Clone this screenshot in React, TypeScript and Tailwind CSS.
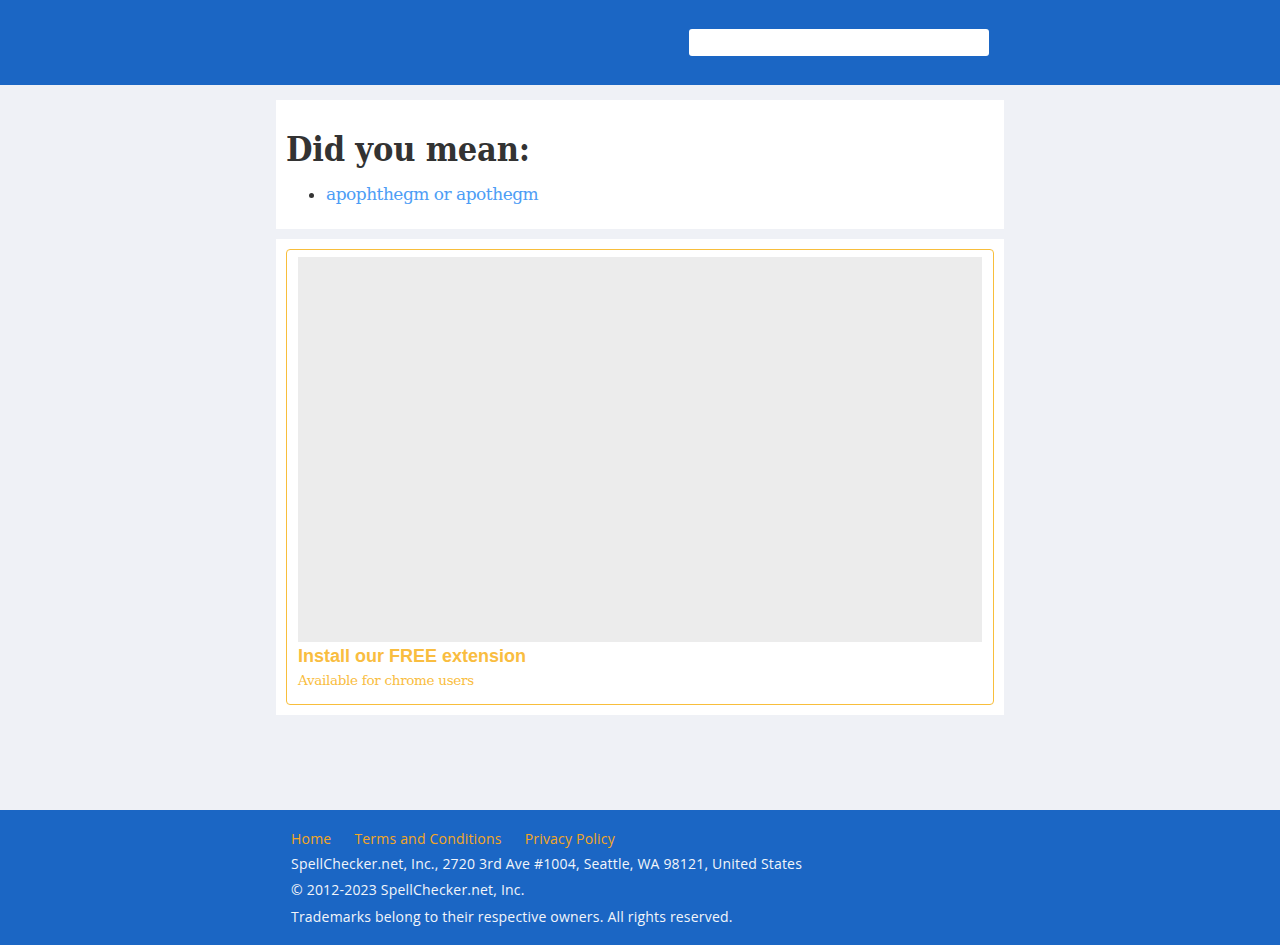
export default function App() {
  return (
    <div className="min-h-[945px] flex flex-col bg-[#eff1f6] font-['Open_Sans',sans-serif]">
      {/* Header */}
      <header className="h-[85px] bg-[#1b66c4] shrink-0">
        <div className="w-[728px] mx-auto flex justify-end pt-[29px] pr-[15px]">
          <input type="text" className="w-[300px] h-[27px] bg-white rounded-[3px] outline-none border-0 px-2 text-sm" />
        </div>
      </header>

      <main className="flex-1 w-[728px] mx-auto pt-[15px]">
        {/* Suggestions */}
        <section className="bg-white px-[10px] pt-[27px] pb-[22px]">
          <h1 className="font-['DejaVu_Serif',serif] font-bold font-stretch-condensed text-[#333] text-[34px] leading-[44px] tracking-[-0.2px]">
            Did you mean:
          </h1>
          <ul className="list-disc pl-[40px] mt-[10px] text-[#333]">
            <li className="font-['DejaVu_Serif',serif] text-[17px] leading-[26px] tracking-[-0.5px]">
              <a href="#" className="text-[#4d9df5]">apophthegm or apothegm</a>
            </li>
          </ul>
        </section>

        {/* Extension promo */}
        <section className="bg-white mt-[10px] p-[10px]">
          <div className="border border-[#f8be3b] rounded-[4px] px-[11px] pt-[7px] pb-[12px]">
            <div className="h-[385px] bg-[#ececec]" />
            <div className="font-['Liberation_Sans',sans-serif] font-bold text-[#f9bd40] text-[18px] leading-[24px] mt-[2px]">
              Install our FREE extension
            </div>
            <div className="font-['DejaVu_Serif',serif] text-[#f9bd40] text-[13.5px] leading-[24px] tracking-[-0.3px]">
              Available for chrome users
            </div>
          </div>
        </section>
      </main>

      {/* Footer */}
      <footer className="bg-[#1b66c4] mt-[95px] h-[135px] shrink-0">
        <div className="w-[728px] mx-auto px-[15px] pt-[18px] text-[14px] tracking-[0.2px]">
          <nav className="flex gap-[23px] leading-[22px]">
            <a href="#" className="text-[#f5a623]">Home</a>
            <a href="#" className="text-[#f5a623]">Terms and Conditions</a>
            <a href="#" className="text-[#f5a623]">Privacy Policy</a>
          </nav>
          <div className="text-[#f2f5fa] leading-[26px] mt-[1px]">
            <p>SpellChecker.net, Inc., 2720 3rd Ave #1004, Seattle, WA 98121, United States</p>
            <p>© 2012-2023 SpellChecker.net, Inc.</p>
            <p className="mt-[1px]">Trademarks belong to their respective owners. All rights reserved.</p>
          </div>
        </div>
      </footer>
    </div>
  );
}
